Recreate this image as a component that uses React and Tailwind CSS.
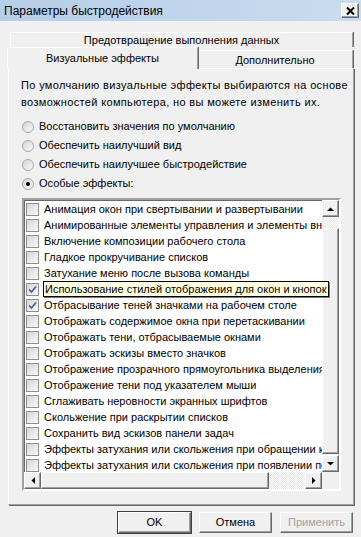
import React from 'react';

const effects = [
    ['Анимация окон при свертывании и развертывании', false],
    ['Анимированные элементы управления и элементы внутри окна', false],
    ['Включение композиции рабочего стола', false],
    ['Гладкое прокручивание списков', false],
    ['Затухание меню после вызова команды', false],
    ['Использование стилей отображения для окон и кнопок', true],
    ['Отбрасывание теней значками на рабочем столе', true],
    ['Отображать содержимое окна при перетаскивании', false],
    ['Отображать тени, отбрасываемые окнами', false],
    ['Отображать эскизы вместо значков', false],
    ['Отображение прозрачного прямоугольника выделения', false],
    ['Отображение тени под указателем мыши', false],
    ['Сглаживать неровности экранных шрифтов', false],
    ['Скольжение при раскрытии списков', false],
    ['Сохранить вид эскизов панели задач', false],
    ['Эффекты затухания или скольжения при обращении к меню', false],
    ['Эффекты затухания или скольжения при появлении подсказок', false],
];

const radios = [
    ['Восстановить значения по умолчанию', false],
    ['Обеспечить наилучший вид', false],
    ['Обеспечить наилучшее быстродействие', false],
    ['Особые эффекты:', true],
];

// classic raised 3d edge
const raised = 'border border-t-white border-l-white border-r-[#696969] border-b-[#696969] shadow-[inset_-1px_-1px_0_#a0a0a0]';
const dither = 'bg-[repeating-conic-gradient(#ffffff_0_25%,#e6e6e6_0_50%)] bg-[length:2px_2px]';

const Arrow = ({dir}) => {
    const pts = {
        up: '0,4 3.5,0.5 7,4',
        down: '0,0 3.5,3.5 7,0',
        left: '4,0 0.5,3.5 4,7',
        right: '0,0 3.5,3.5 0,7',
    }[dir];
    const vertical = dir === 'up' || dir === 'down';
    return (
        <svg width={vertical ? 7 : 4} height={vertical ? 4 : 7} viewBox={vertical ? '0 0 7 4' : '0 0 4 7'}>
            <polygon points={pts} fill="#000" />
        </svg>
    );
};

const ScrollBtn = ({dir}) => (
    <div className={`w-[17px] h-[17px] shrink-0 flex items-center justify-center bg-[#f0f0f0] ${raised}`}>
        <Arrow dir={dir} />
    </div>
);

const Checkbox = ({checked}) => (
    <div className="w-[13px] h-[13px] shrink-0 border border-[#8f8f8f] bg-linear-to-br from-[#d6d6d6] to-[#fafafa] flex items-center justify-center">
        {checked &&
            <svg width="9" height="9" viewBox="0 0 9 9">
                <path d="M1 4.5 L3.5 7 L8 1.5" stroke="#3e5b9a" strokeWidth="1.7" fill="none" />
            </svg>
        }
    </div>
);

const Radio = ({checked}) => (
    <div className="w-[12px] h-[12px] shrink-0 rounded-full border border-[#a7a7a7] bg-linear-to-br from-[#d4d4d4] to-[#fbfbfb] flex items-center justify-center">
        {checked && <div className="w-[4px] h-[4px] rounded-full bg-black" />}
    </div>
);

const Button = ({children, disabled, primary}) => (
    <div className={`w-[73px] h-[21px] flex items-center justify-center bg-[#f0f0f0] ${primary ? 'outline outline-[#404040]' : ''} ${raised} ${disabled ? 'text-[#a0a0a0]' : 'text-black'}`}>
        {children}
    </div>
);

export default function App() {
    return (
        <div className="w-[361px] h-[537px] overflow-hidden bg-[#f0f0f0] text-[11px] text-black font-['Liberation_Sans',Arial,sans-serif] select-none">
            {/* title bar */}
            <div className="h-[21px] flex items-center justify-between pl-[4px] pr-[2px] bg-linear-to-r from-[#b6cee8] to-[#c9dcf0]">
                <span className="text-[12px]">Параметры быстродействия</span>
                <div className={`w-[18px] h-[15px] flex items-center justify-center bg-[#f0f0f0] ${raised}`}>
                    <svg width="9" height="8" viewBox="0 0 9 8">
                        <path d="M1 0.5 L8 7.5 M8 0.5 L1 7.5" stroke="#000" strokeWidth="2" />
                    </svg>
                </div>
            </div>

            {/* tabs */}
            <div className="mt-[11px] ml-[10px] w-[343px] h-[15px] leading-[15px] text-center border-l border-t border-white border-r border-r-[#a0a0a0] shadow-[1px_0_0_#696969] rounded-tl-[2px]">
                Предотвращение выполнения данных
            </div>
            <div className="h-[21px] flex items-end">
                <div className="relative z-10 ml-[7px] w-[191px] h-[22px] -mb-px leading-[20px] text-center bg-[#f0f0f0] border-l border-t border-white border-r border-r-[#a0a0a0] shadow-[1px_0_0_#696969] rounded-tl-[2px]">
                    Визуальные эффекты
                </div>
                <div className="w-[155px] h-[18px] leading-[18px] text-center border-t border-white border-r border-r-[#a0a0a0] shadow-[1px_0_0_#696969]">
                    Дополнительно
                </div>
            </div>

            {/* panel */}
            <div className="ml-[8px] w-[346px] h-[437px] border border-t-white border-l-white border-r-[#a0a0a0] border-b-[#a0a0a0] shadow-[1px_1px_0_#696969] px-[12px] pt-[8px]">
                <p className="leading-[17px] tracking-[0.35px] whitespace-nowrap">
                    По умолчанию визуальные эффекты выбираются на основе<br />
                    возможностей компьютера, но вы можете изменить их.
                </p>
                <div className="mt-[6px] flex flex-col">
                    {radios.map(([label, checked]) =>
                        <div key={label} className="h-[19px] flex items-center gap-[5px] pl-[1px]">
                            <Radio checked={checked} />
                            <span>{label}</span>
                        </div>
                    )}
                </div>

                {/* list */}
                <div className="relative mt-[5px] ml-[1px] w-[319px] h-[293px] border-2 border-t-[#a0a0a0] border-l-[#a0a0a0] border-r-white border-b-white shadow-[inset_1px_1px_0_#696969] bg-white flex flex-col">
                    <div className="flex h-[272px]">
                        <div className="flex-1 overflow-hidden pt-px">
                            {effects.map(([label, checked]) =>
                                <div key={label} className="h-[16px] flex items-center gap-[5px] pl-[2px] whitespace-nowrap">
                                    <Checkbox checked={checked} />
                                    <span>{label}</span>
                                </div>
                            )}
                        </div>
                        <div className="w-[17px] flex flex-col bg-[#f0f0f0]">
                            <ScrollBtn dir="up" />
                            <div className={`h-[11px] ${dither}`} />
                            <div className={`h-[226px] bg-[#f0f0f0] ${raised}`} />
                            <div className={`h-px ${dither}`} />
                            <ScrollBtn dir="down" />
                        </div>
                    </div>
                    <div className="flex h-[17px]">
                        <ScrollBtn dir="left" />
                        <div className={`w-[228px] bg-[#f0f0f0] ${raised}`} />
                        <div className={`w-[36px] ${dither}`} />
                        <ScrollBtn dir="right" />
                        <div className="flex-1 bg-[#f0f0f0]" />
                    </div>

                    {/* tooltip */}
                    <div className="absolute z-20 left-[19px] top-[81px] w-max h-[16px] leading-[14px] pl-px pr-[2px] whitespace-nowrap bg-[#ffffe1] border border-black shadow-[1px_1px_0_#7a7a7a]">
                        Использование стилей отображения для окон и кнопок
                    </div>
                </div>
            </div>

            {/* buttons */}
            <div className="mt-[7px] flex justify-end gap-[8px] pr-[8px]">
                <Button primary>OK</Button>
                <Button>Отмена</Button>
                <Button disabled>Применить</Button>
            </div>
        </div>
    );
}
